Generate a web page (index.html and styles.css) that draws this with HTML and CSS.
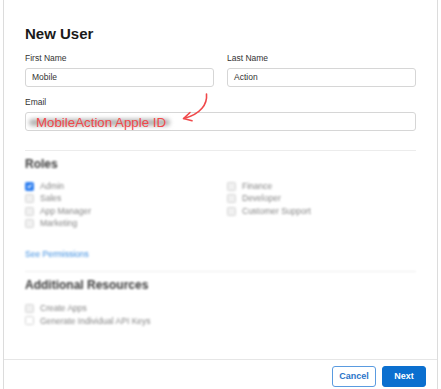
FILE: index.html
```html
<!DOCTYPE html>
<html>
<head>
<meta charset="utf-8">
<link rel="stylesheet" href="styles.css">
</head>
<body>
<div class="modal">
  <div class="content">
    <h1 class="title">New User</h1>
    <div class="row2">
      <div class="field">
        <div class="label">First Name</div>
        <div class="input">Mobile</div>
      </div>
      <div class="field">
        <div class="label">Last Name</div>
        <div class="input">Action</div>
      </div>
    </div>
    <div class="field email-field">
      <div class="label">Email</div>
      <div class="input email">
        <span class="smudge"></span>
        <span class="redtext">MobileAction Apple ID</span>
      </div>
    </div>
    <div class="divider d1"></div>
    <div class="blurred">
      <h2 class="section">Roles</h2>
      <div class="roles">
        <div class="col">
          <div class="check"><span class="box on"><svg viewBox="0 0 8 8" width="8" height="8"><path d="M1.8 4.2 L3.4 5.8 L6.3 2.3" fill="none" stroke="#fff" stroke-width="1.3"/></svg></span><span class="ctext">Admin</span></div>
          <div class="check"><span class="box"></span><span class="ctext">Sales</span></div>
          <div class="check"><span class="box"></span><span class="ctext">App Manager</span></div>
          <div class="check"><span class="box"></span><span class="ctext">Marketing</span></div>
        </div>
        <div class="col">
          <div class="check"><span class="box"></span><span class="ctext">Finance</span></div>
          <div class="check"><span class="box"></span><span class="ctext">Developer</span></div>
          <div class="check"><span class="box"></span><span class="ctext">Customer Support</span></div>
        </div>
      </div>
      <div class="link">See Permissions</div>
      <div class="divider d2"></div>
      <h2 class="section">Additional Resources</h2>
      <div class="extras">
        <div class="check"><span class="box"></span><span class="ctext">Create Apps</span></div>
        <div class="check"><span class="box empty"></span><span class="ctext">Generate Individual API Keys</span></div>
      </div>
    </div>
  </div>
  <div class="footer">
    <button class="btn cancel">Cancel</button>
    <button class="btn next">Next</button>
  </div>
</div>
<svg class="arrow" width="441" height="389" viewBox="0 0 441 389">
  <path d="M206.5 94 C207.5 104 201 114 184 118.5" fill="none" stroke="#f0494b" stroke-width="1.6" stroke-linecap="round"/>
  <path d="M190 112.5 L183.5 118.6 L192 120.8" fill="none" stroke="#f0494b" stroke-width="1.6" stroke-linecap="round" stroke-linejoin="round"/>
</svg>
</body>
</html>
```
FILE: styles.css
```css
html, body {
  margin: 0;
  padding: 0;
  background: #fff;
}
body {
  font-family: "Liberation Sans", Arial, sans-serif;
  color: #1d1d1f;
  width: 441px;
  height: 389px;
  overflow: hidden;
  position: relative;
}
.modal {
  margin-left: 3px;
  width: 433px;
  height: 389px;
  border-left: 1px solid #dcdcdc;
  border-right: 1px solid #dcdcdc;
  display: flex;
  flex-direction: column;
  box-sizing: content-box;
}
.content {
  flex: 1;
  padding: 25px 20px 0 21px;
}
.title {
  margin: 0;
  font-size: 15px;
  line-height: 18px;
  font-weight: bold;
  color: #1a1a1a;
}
.row2 {
  display: grid;
  grid-template-columns: 189px 189px;
  column-gap: 13px;
  margin-top: 10px;
}
.label {
  font-size: 8.5px;
  line-height: 11px;
  color: #333;
  margin-bottom: 4px;
}
.input {
  height: 17px;
  border: 1px solid #d6d6d6;
  border-radius: 3px;
  font-size: 8.5px;
  line-height: 17px;
  padding-left: 6px;
  color: #333;
  position: relative;
}
.email-field {
  margin-top: 10px;
}
.email {
  width: 383px;
}
.smudge {
  position: absolute;
  left: 3px;
  top: 6px;
  width: 141px;
  height: 7px;
  background: #b5b5b5;
  border-radius: 4px;
  filter: blur(2px);
}
.redtext {
  position: absolute;
  left: 10px;
  top: 0;
  font-size: 13.3px;
  line-height: 19px;
  color: #f0494b;
}
.divider {
  height: 1px;
  background: #ececec;
  width: 391px;
}
.d1 {
  margin-top: 19px;
}
.blurred {
  filter: blur(1.3px);
}
.section {
  margin: 6px 0 0 0;
  font-size: 12px;
  line-height: 14px;
  font-weight: bold;
  color: #3a3a3a;
}
.roles {
  display: grid;
  grid-template-columns: 202px 189px;
  margin-top: 8.75px;
}
.check {
  height: 12.5px;
  display: flex;
  align-items: center;
}
.box {
  width: 7px;
  height: 7px;
  border: 1px solid #d3d3d3;
  background: #f1f1f1;
  border-radius: 1.5px;
  margin-right: 6px;
  flex: none;
  display: flex;
  align-items: center;
  justify-content: center;
}
.box.on {
  background: #2f7ff0;
  border-color: #2f7ff0;
}
.box.on svg {
  display: block;
}
.box.empty {
  background: #fff;
}
.ctext {
  font-size: 8.5px;
  color: #858585;
  line-height: 12.5px;
}
.link {
  margin-top: 19px;
  font-size: 8.5px;
  line-height: 11px;
  color: #3d8ee0;
}
.d2 {
  margin-top: 11.5px;
}
.section + .extras {
  margin-top: 9.75px;
}
.footer {
  height: 30px;
  border-top: 1px solid #e6e6e6;
  display: flex;
  justify-content: flex-end;
  align-items: flex-start;
  padding: 6px 11px 0 0;
  box-sizing: border-box;
  gap: 6px;
}
.btn {
  height: 21px;
  width: 44px;
  border-radius: 3px;
  font-family: "Liberation Sans", Arial, sans-serif;
  font-size: 9px;
  font-weight: bold;
  padding: 0;
  margin: 0;
  line-height: 19px;
  cursor: pointer;
}
.cancel {
  background: #fff;
  border: 1px solid #5a9be0;
  color: #2a74c8;
}
.next {
  background: #0b6fcf;
  border: 1px solid #0b6fcf;
  color: #fff;
}
.arrow {
  position: absolute;
  left: 0;
  top: 0;
  pointer-events: none;
}
```
